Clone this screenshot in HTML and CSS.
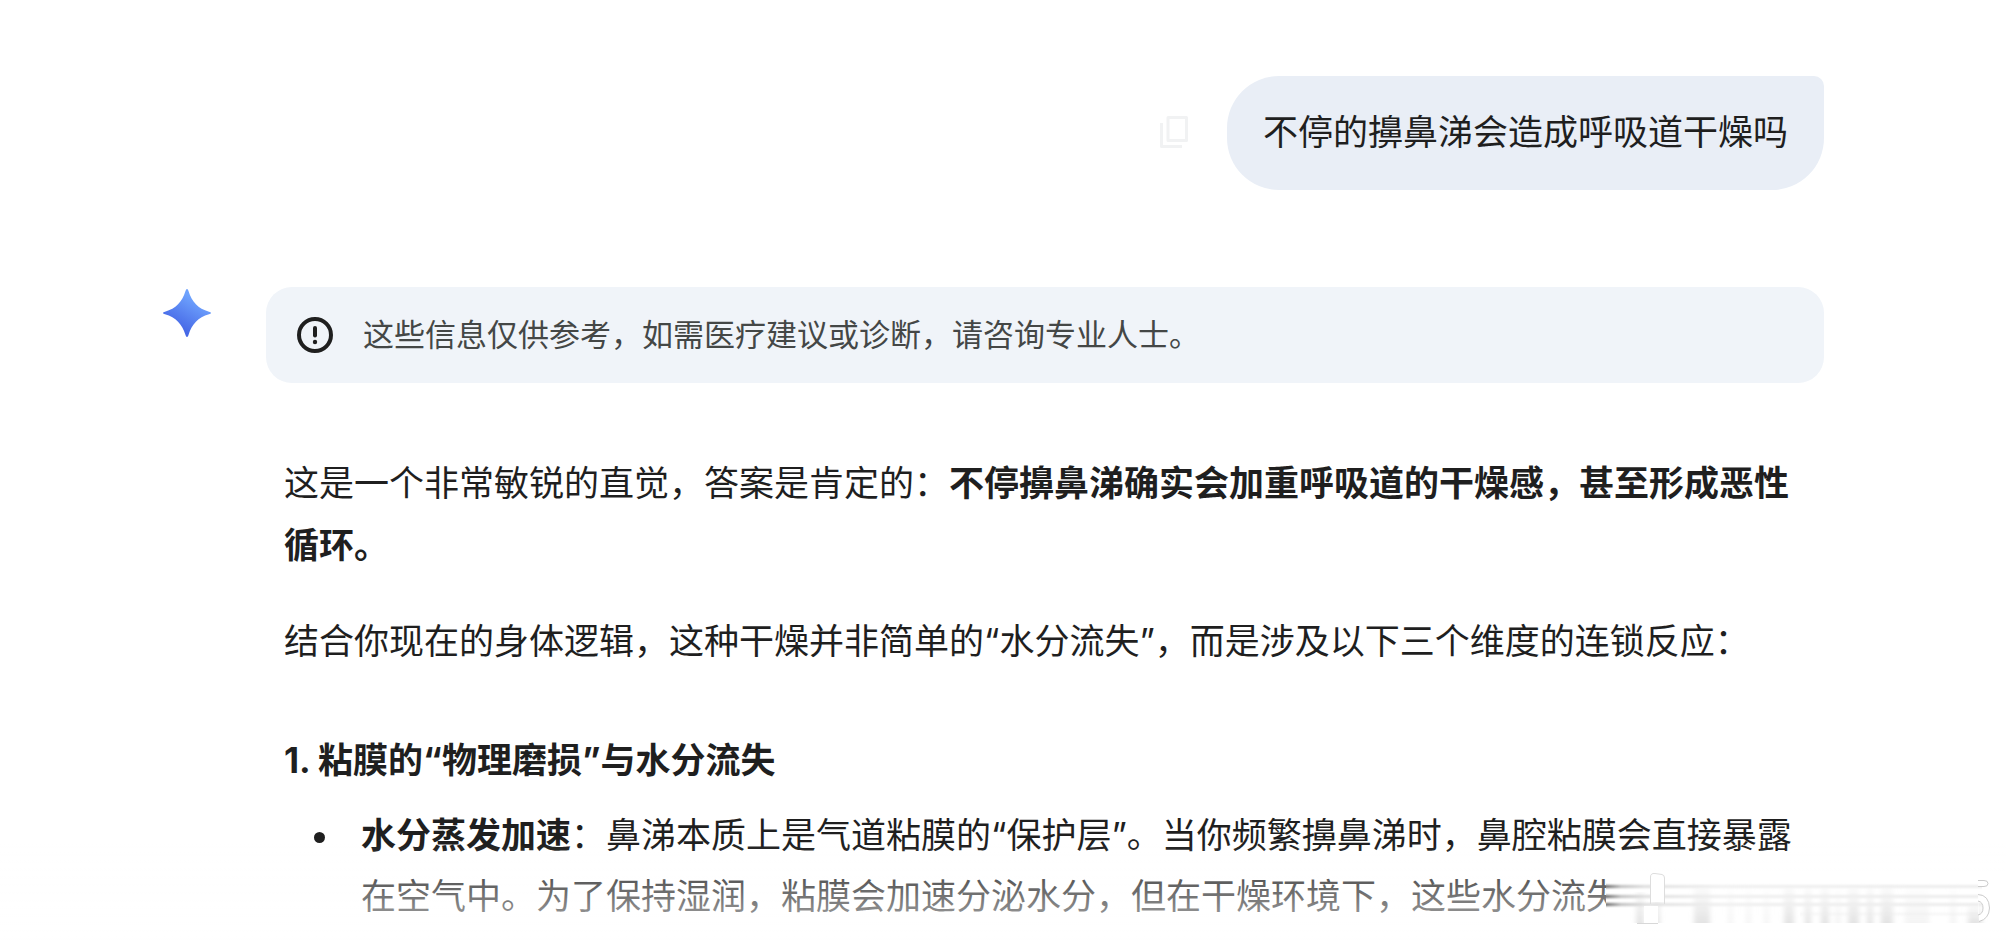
FILE: index.html
```html
<!DOCTYPE html>
<html lang="zh-CN">
<head>
<meta charset="utf-8">
<meta name="viewport" content="width=device-width, initial-scale=1">
<title>不停的擤鼻涕会造成呼吸道干燥吗</title>
<link rel="stylesheet" href="styles.css">
</head>
<body>
<main class="chat">
  <section class="query">
    <button class="copy" type="button" aria-label="复制">
      <svg viewBox="0 0 30 34" width="30" height="34" fill="none" stroke="currentColor" stroke-width="3" stroke-linejoin="round" aria-hidden="true">
        <path d="M9 1.500H27.500V24.500H9ZM2.500 7V30.500H23"/>
      </svg>
    </button>
    <p class="bubble">不停的擤鼻涕会造成呼吸道干燥吗</p>
  </section>
  <section class="reply">
    <svg class="spark" viewBox="0 0 50 50" width="50" height="50" aria-hidden="true">
      <defs>
        <linearGradient id="spark-fill" x1="0.3" y1="0.8" x2="0.65" y2="0.2">
          <stop offset="0" stop-color="#4668e6"/>
          <stop offset="1" stop-color="#6ea2fd"/>
        </linearGradient>
      </defs>
      <path fill="url(#spark-fill)" d="M25 1Q26 1 26.500 3C30 14 36 20.500 47 23.700Q49 24.300 49 25Q49 25.700 47 26.300C36 29.500 30 36 26.500 47Q26 49 25 49Q24 49 23.500 47C20 36 14 29.500 3 26.300Q1 25.700 1 25Q1 24.300 3 23.700C14 20.500 20 14 23.500 3Q24 1 25 1Z"/>
    </svg>
    <div class="content">
      <aside class="notice">
        <svg viewBox="0 0 36 36" width="36" height="36" fill="none" stroke="currentColor" stroke-width="4" stroke-linecap="round" aria-hidden="true">
          <circle cx="18" cy="18" r="16"/>
          <path d="M18 11V18.500"/>
          <circle cx="18" cy="25" r="2.200" fill="currentColor" stroke="none"/>
        </svg>
        <p>这些信息仅供参考，如需医疗建议或诊断，请咨询专业人士。</p>
      </aside>
      <article class="answer">
        <p>这是一个非常敏锐的直觉，答案是肯定的：<strong>不停擤鼻涕确实会加重呼吸道的干燥感，甚至形成恶性循环。</strong></p>
        <p>结合你现在的身体逻辑，这种干燥并非简单的“水分流失”，而是涉及以下三个维度的连锁反应：</p>
        <h3>1. 粘膜的“物理磨损”与水分流失</h3>
        <ul>
          <li><div><strong>水分蒸发加速</strong>：鼻涕本质上是气道粘膜的“保护层”。当你频繁擤鼻涕时，鼻腔粘膜会直接暴露在空气中。为了保持湿润，粘膜会加速分泌水分，但在干燥环境下，这些水分流失</div></li>
        </ul>
      </article>
    </div>
  </section>
</main>
<div class="fade"></div>
<svg class="smear" viewBox="0 0 406 76" width="406" height="76" aria-hidden="true">
  <defs>
    <linearGradient id="streak" gradientUnits="userSpaceOnUse" x1="6" y1="0" x2="390" y2="0">
      <stop offset="0" stop-color="#666"/>
      <stop offset="0.04" stop-color="#c0c0c0"/>
      <stop offset="0.1" stop-color="#dedede"/>
      <stop offset="0.3" stop-color="#f0f0f0"/>
      <stop offset="1" stop-color="#ececec"/>
    </linearGradient>
    <linearGradient id="band" x1="0" y1="0" x2="0" y2="1">
      <stop offset="0" stop-color="#e4e4e4" stop-opacity="0"/>
      <stop offset="0.6" stop-color="#e4e4e4" stop-opacity="0.6"/>
      <stop offset="1" stop-color="#e4e4e4"/>
    </linearGradient>
    <filter id="soft" x="-10%" y="-30%" width="120%" height="160%"><feGaussianBlur stdDeviation="2.500 0"/></filter>
    <filter id="soft-line" filterUnits="userSpaceOnUse" x="6" y="0" width="400" height="76"><feGaussianBlur stdDeviation="0 1"/></filter>
  </defs>
  <path fill="#fff" d="M6 4H406V58H6Z"/>
  <g fill="url(#band)" filter="url(#soft)">
    <path d="M36 24h8v31h-8zM54 24h6v31h-6zM94 14h16v41h-16z"/>
    <path d="M184 14h10v41h-10zM205 14h6v41h-6zM221 14h8v41h-8zM248 14h11v41h-11zM267 14h6v41h-6zM281 14h12v41h-12z"/>
    <path opacity="0.4" d="M128 14h5v41h-5zM146 14h5v41h-5zM164 14h5v41h-5zM235 14h6v41h-6zM305 14h24v41h-24zM350 14h6v41h-6z"/>
    <path d="M368 34h14v21h-14z"/>
  </g>
  <g fill="url(#streak)" filter="url(#soft-line)">
    <path d="M6 17h376v3H6zM6 27h376v3H6zM6 35h376v3H6z"/>
    <path opacity="0.5" d="M200 45h178v2H200z"/>
  </g>
  <path fill="#fff" d="M44 38h14v17H44z"/>
  <path fill="none" stroke="#d8d8d8" d="M37 55.500H58"/>
  <path fill="#fff" d="M51 9Q51 5 55 5.500L62 6.500Q64 7 64 10V34H51Z"/>
  <path fill="none" stroke="#ddd" d="M50.500 36V9Q50.500 5 55 5.500L62 6.500Q64.500 7 64.500 10V36"/>
  <path fill="#fff" stroke="#ccc" d="M378 12.500H384Q388 12.500 388 15.500Q388 18.500 384 18.500H378"/>
  <path fill="#fff" stroke="#ccc" d="M378 26.500Q389 27 389.500 40Q389 51 379 53.500M378 47Q383 46 383 40Q383 34 378 33"/>
</svg>
</body>
</html>
```
FILE: styles.css
```css
* { box-sizing: border-box; }
body {
  margin: 0;
  background: #fff;
  color: #1f1f1f;
  font-family: Inter, "Noto Sans CJK SC", sans-serif;
  font-size: 35px;
  line-height: 62px;
}
p, h3, ul { margin: 0; }
.chat { padding: 76px 182px 0 162px; }
.query {
  display: flex;
  justify-content: flex-end;
  align-items: center;
  gap: 38px;
}
.copy {
  display: flex;
  padding: 0;
  border: 0;
  background: none;
  color: #f1f2f3;
}
.bubble {
  padding: 25px 36px 27px;
  background: #e9eef6;
  border-radius: 52px 10px 52px 52px;
}
.reply {
  display: flex;
  align-items: flex-start;
  gap: 54px;
  margin-top: 97px;
}
.spark { flex: none; margin-top: 1px; }
.content { flex: 1; }
.notice {
  display: flex;
  align-items: center;
  gap: 30px;
  padding: 17px 31px 18px;
  border-radius: 26px;
  background: #f0f4f9;
}
.notice svg { flex: none; }
.notice p { color: #444746; font-size: 31px; line-height: 61px; }
.answer { padding: 69px 18px 0; }
.answer p + p { margin-top: 34px; }
.answer h3 {
  margin-top: 57px;
  font-size: 35px;
  font-weight: 700;
}
.answer ul {
  margin-top: 14px;
  padding-left: 30px;
  line-height: 61px;
  list-style: none;
}
.answer li {
  display: flex;
  align-items: flex-start;
  gap: 36px;
}
.answer li::before {
  content: "";
  flex: none;
  width: 11px;
  height: 11px;
  margin-top: 27px;
  border-radius: 50%;
  background: currentColor;
}
.fade {
  position: fixed;
  inset: auto 0 0;
  height: 100px;
  background: linear-gradient(#fff0, #fffb);
}
.smear {
  position: fixed;
  right: 0;
  bottom: 0;
}
```
